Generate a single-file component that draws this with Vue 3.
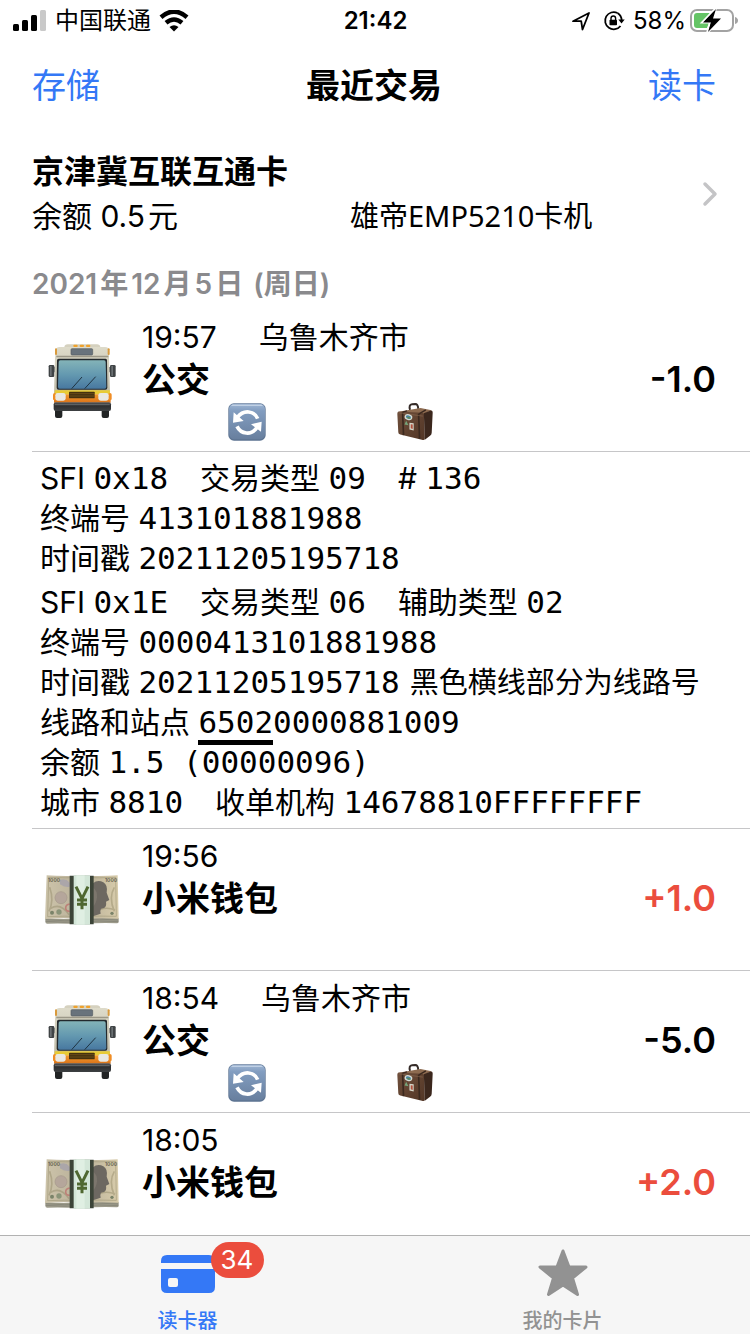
<template>
  <div class="app">
    <!-- shared gradients and pictograms -->
    <svg class="sprite" width="0" height="0" aria-hidden="true">
      <defs>
        <linearGradient id="glass" x1="0" y1="0" x2="0" y2="1">
          <stop offset="0" stop-color="#83b3b8" />
          <stop offset="0.5" stop-color="#6499b0" />
          <stop offset="1" stop-color="#4878a0" />
        </linearGradient>
        <linearGradient id="shell" x1="0" y1="0" x2="0" y2="1">
          <stop offset="0" stop-color="#dedbca" />
          <stop offset="1" stop-color="#bdb9a6" />
        </linearGradient>
        <linearGradient id="orange" x1="0" y1="0" x2="0" y2="1">
          <stop offset="0" stop-color="#f39a2e" />
          <stop offset="1" stop-color="#d9731a" />
        </linearGradient>
        <linearGradient id="bumper" x1="0" y1="0" x2="0" y2="1">
          <stop offset="0" stop-color="#55585b" />
          <stop offset="0.4" stop-color="#2c2e30" />
          <stop offset="1" stop-color="#3d4042" />
        </linearGradient>
        <linearGradient id="key" x1="0" y1="0" x2="0" y2="1">
          <stop offset="0" stop-color="#9fb6d4" />
          <stop offset="0.2" stop-color="#829dc0" />
          <stop offset="1" stop-color="#687f9e" />
        </linearGradient>
        <linearGradient id="leather" x1="0" y1="0" x2="1" y2="1">
          <stop offset="0" stop-color="#6f4f3b" />
          <stop offset="1" stop-color="#523626" />
        </linearGradient>
        <linearGradient id="note" x1="0" y1="0" x2="1" y2="0">
          <stop offset="0" stop-color="#cdc4aa" />
          <stop offset="0.5" stop-color="#b7ae98" />
          <stop offset="1" stop-color="#d8ccab" />
        </linearGradient>
      </defs>

      <symbol id="bus" viewBox="52 96 210 228">
        <rect x="76" y="290" width="22" height="31" rx="6" fill="#222425" />
        <rect x="216" y="290" width="22" height="31" rx="6" fill="#222425" />
        <path d="M72 168h8v16h-8zM236 168h8v16h-8z" fill="#77797a" />
        <rect x="57" y="162" width="17" height="36" rx="4" fill="#3f4345" />
        <rect x="241" y="162" width="17" height="36" rx="4" fill="#3f4345" />
        <path d="M61 165h5v30h-5zM245 165h5v30h-5z" fill="#6b7073" />
        <path d="M104 108q1-8 10-8h88q9 0 10 8z" fill="#d5d1bf" />
        <path d="M78 120q0-12 12-12h136q12 0 12 12v22l3 108H73l3-108z" fill="url(#shell)" />
        <rect x="76" y="112" width="6" height="20" rx="3" fill="#d99a3c" />
        <rect x="234" y="112" width="6" height="20" rx="3" fill="#d99a3c" />
        <path d="M80 134h156v5H80z" fill="#9c9888" />
        <rect x="131" y="101" width="13" height="7" rx="3" fill="#f0a22c" />
        <rect x="150" y="101" width="13" height="7" rx="3" fill="#f0a22c" />
        <rect x="169" y="101" width="13" height="7" rx="3" fill="#f0a22c" />
        <rect x="124" y="113" width="65" height="19" rx="3" fill="#69737c" stroke="#555c62" stroke-width="2" />
        <path d="M87 143h141q4 0 4 5l1 82q0 6-6 6H87q-6 0-6-6l1-82q0-5 5-5z" fill="#23292d" />
        <path d="M92 148h131q5 0 5 5l2 74q0 6-5 6H90q-5 0-5-6l2-74q0-5 5-5z" fill="url(#glass)" />
        <path d="M126 233l31-35M165 233l33-36" stroke="#1f3442" stroke-width="3" fill="none" />
        <path d="M75 238h166v12H75z" fill="#e8cb35" />
        <path d="M73 250h170v25H73z" fill="url(#orange)" />
        <rect x="118" y="242" width="77" height="20" rx="2" fill="#44310f" />
        <path d="M120 248h73M120 255h73" stroke="#7d5a1c" stroke-width="2" />
        <rect x="70" y="246" width="10" height="22" rx="5" fill="#f08d25" />
        <rect x="236" y="246" width="10" height="22" rx="5" fill="#f08d25" />
        <rect x="77" y="246" width="31" height="23" rx="7" fill="#e9e8e2" />
        <rect x="206" y="246" width="31" height="23" rx="7" fill="#e9e8e2" />
        <rect x="72" y="274" width="172" height="26" rx="6" fill="url(#bumper)" />
        <path d="M76 281h164" stroke="#797d80" stroke-width="2" />
      </symbol>

      <symbol id="money" viewBox="43 100 228 156">
        <path d="M47 232q60 6 110 0t110 0v11q0 5-6 5-50-2-104 2-60-2-104-1-6 0-6-6z" fill="#9c9a8a" />
        <path d="M48 237q60 6 109 1t109 0M48 242q60 5 109 1t109 0" stroke="#77776a" stroke-width="1.5" fill="none" />
        <path d="M51 104q50 4 106 1 60 3 107-1l3 130q-56-3-110 1-58-4-111 0z" fill="url(#note)" />
        <path d="M57 110q50 3 100 0 54 3 101 0l2 117q-52-2-103 1-53-3-103 0z" fill="none" stroke="#a39b7c" stroke-width="2" />
        <path d="M60 140q14 40-2 72M254 140q-18 30 0 72M62 204q30-20 56 18M192 218q30-24 64-10" fill="none" stroke="#918767" stroke-width="5" opacity="0.45" />
        <circle cx="94" cy="171" r="18" fill="#b5a69b" stroke="#a5998b" stroke-width="2" />
        <path d="M91 118q16-7 29 8v12q-16 3-29-7z" fill="#a5a1ab" opacity="0.8" />
        <path d="M120 190q-12 2-12 12t12 10" fill="none" stroke="#bd8178" stroke-width="5" />
        <circle cx="67" cy="216" r="6" fill="#7a8369" />
        <circle cx="88" cy="214" r="8" fill="#8a9478" />
        <circle cx="247" cy="218" r="5" fill="#7a8369" />
        <path d="M190 128q14-12 31-3 14 8 10 31l8 22-10 5q3 16-8 20-12 0-8 16l-23 8z" fill="#6d6861" />
        <path d="M190 140q14 12 12 30t-12 28z" fill="#7c766d" />
        <text x="55" y="125" class="note-text">1000</text>
        <text x="226" y="125" class="note-text">1000</text>
        <path d="M120 105h72v146h-72z" fill="#3c4438" />
        <path d="M132 104h49v148h-49z" fill="#d3e6d8" />
        <path d="M140 104h25v148h-25z" fill="#e0efe3" />
        <path d="M139 138l18 36 18-36M157 172v34M142 178h30M142 191h30" fill="none" stroke="#4f6831" stroke-width="9" />
      </symbol>

      <symbol id="refresh" viewBox="0 0 114 114">
        <rect x="1" y="1" width="112" height="112" rx="17" fill="#5c7391" />
        <rect x="3" y="2" width="108" height="107" rx="16" fill="url(#key)" />
        <path d="M12 7h90" stroke="#c0d0e4" stroke-width="4" stroke-linecap="round" />
        <path d="M28 43q14-18 34-16 20 2 27 20M88 72q-13 20-33 18-19-2-28-20" fill="none" stroke="#fff" stroke-width="11" />
        <path d="M17 28l-2 31 32-5zM99 86l2-30-32 8z" fill="#fff" />
      </symbol>

      <symbol id="suitcase" viewBox="48 36 116 116">
        <path d="M91 57q-5-16 6-17l10-1q8 0 9 15" fill="none" stroke="#342b28" stroke-width="6" />
        <path d="M55 63l68-12 34 7-26 13z" fill="#8d6b50" />
        <path d="M56 62q-4 1-4 7l3 56q0 6 6 7l69 17q6 1 6-5l-2-72q0-5-5-6z" fill="url(#leather)" />
        <path d="M133 67l21-8q6-1 6 6l-3 62q0 6-5 9l-16 12z" fill="#3b271d" />
        <path d="M68 65l3 69M117 70l3 75" stroke="#3b291f" stroke-width="5" />
        <path d="M68 64l14-4M117 70l22-13" stroke="#3b291f" stroke-width="4" />
        <path d="M56 66l74 10" stroke="#a08064" stroke-width="2" opacity="0.6" />
        <ellipse cx="86" cy="79" rx="12" ry="9" fill="#d5dcd6" transform="rotate(16 86 79)" />
        <ellipse cx="86" cy="79" rx="8" ry="5" fill="#4c849e" transform="rotate(16 86 79)" />
        <path d="M79 82l8-4 7 6z" fill="#5f8a48" />
        <path d="M79 90l7 14-12-2z" fill="#75a47a" />
        <path d="M89 96l13 2v22l-13-3z" fill="#d4d5c8" />
        <path d="M93 101l6 1v13l-6-2z" fill="#b2503c" />
      </symbol>
    </svg>

    <header class="status-bar">
      <div class="status-left">
        <svg width="34" height="22" viewBox="0 0 34 22" aria-hidden="true">
          <rect x="0" y="14" width="6" height="7" rx="1.5" />
          <rect x="9" y="10" width="6" height="11" rx="1.5" />
          <rect x="18" y="5" width="6" height="16" rx="1.5" />
          <rect x="27" y="0" width="6" height="21" rx="1.5" fill="#c9c9c9" />
        </svg>
        <span>中国联通</span>
        <svg width="30" height="22" viewBox="0 0 30 22" aria-hidden="true">
          <path d="M2 7.200Q15-4 28 7.200" fill="none" stroke="#000" stroke-width="4.500" />
          <path d="M7 12.800q8-6.500 16 0" fill="none" stroke="#000" stroke-width="4.500" />
          <path d="M10.500 17q4.500-3.500 9 0L15 21.500z" />
        </svg>
      </div>
      <span class="clock">21:42</span>
      <div class="status-right">
        <svg width="20" height="20" viewBox="0 0 20 20" aria-hidden="true">
          <path d="M2 10.200L18 2l-6.500 16.500-1.300-8.300z" fill="none" stroke="#000" stroke-width="1.800" stroke-linejoin="round" />
        </svg>
        <svg class="lock" width="22" height="22" viewBox="0 0 22 22" aria-hidden="true">
          <path d="M14.500 3A8.600 8.600 0 1 0 17.500 16" fill="none" stroke="#000" stroke-width="1.800" />
          <path d="M14.500 3A8.600 8.600 0 0 1 18.600 10" fill="none" stroke="#000" stroke-width="1.800" />
          <path d="M15.300 9.500h6.400L18.500 13.500z" />
          <rect x="6.500" y="9.700" width="7.500" height="5.600" rx="0.800" />
          <path d="M8 10V8.300a2.300 2.300 0 0 1 4.600 0V10" fill="none" stroke="#000" stroke-width="1.400" />
        </svg>
        <span>58%</span>
        <svg width="48" height="26" viewBox="0 0 48 26" aria-hidden="true">
          <rect x="1" y="2" width="42" height="21" rx="6" fill="none" stroke="#a3a3a3" stroke-width="2" />
          <path d="M45 9q3 1 3 3.500T45 16z" fill="#a3a3a3" />
          <path d="M7 5h13l-7 10h6l-2 5H7q-3 0-3-3V8q0-3 3-3z" fill="#65c466" />
          <path d="M26 0L12 14.500h8L17 25l14-14.500h-8z" stroke="#fff" stroke-width="2" />
          <path d="M26 1L13 14.500h8L18 24l13-13.500h-8z" />
        </svg>
      </div>
    </header>

    <nav class="nav-bar">
      <button type="button" class="nav-btn">存储</button>
      <h1>最近交易</h1>
      <button type="button" class="nav-btn">读卡</button>
    </nav>

    <main class="content">
      <a class="card" href="#card">
        <span class="card-info">
          <strong>京津冀互联互通卡</strong>
          <span class="card-line">
            <span class="balance">余额 0.5<span class="unit">元</span></span>
            <span class="note">雄帝EMP5210卡机</span>
          </span>
        </span>
        <svg width="16" height="26" viewBox="0 0 16 26" aria-hidden="true">
          <path d="M3 3l10 10L3 23" fill="none" stroke="#c4c4c6" stroke-width="3.500" stroke-linecap="round" stroke-linejoin="round" />
        </svg>
      </a>

      <h2>2021<span class="unit">年</span>12<span class="unit">月</span>5<span class="unit">日</span> (周日)</h2>

      <ul class="list">
        <li v-for="item in trades" :key="item.time">
          <div class="trade">
            <svg v-if="item.kind === 'bus'" class="trade-icon" width="70" height="76"><use href="#bus" /></svg>
            <svg v-else class="trade-icon" width="76" height="52"><use href="#money" /></svg>
            <div class="trade-body">
              <div class="trade-meta">
                <time>{{ item.time }}</time>
                <span v-if="item.city">{{ item.city }}</span>
              </div>
              <strong class="trade-name">{{ item.name }}</strong>
              <div v-if="item.kind === 'bus'" class="trade-tags">
                <svg width="38" height="38"><use href="#refresh" /></svg>
                <svg width="38" height="38"><use href="#suitcase" /></svg>
              </div>
            </div>
            <span class="amount" :class="{ 'amount--in': item.amount > 0 }">{{ format(item.amount) }}</span>
          </div>

          <div v-if="item.records" class="details">
            <div v-for="(record, r) in item.records" :key="r" class="record">
              <p v-for="(line, l) in record" :key="l">
                <span v-for="field in line" :key="field.label" class="field">
                  {{ field.label }}
                  <code><span v-if="field.mark" class="mark">{{ field.mark }}</span>{{ field.value }}</code>
                  <span v-if="field.note" class="note note--inline">{{ field.note }}</span>
                </span>
              </p>
            </div>
          </div>
        </li>
      </ul>
    </main>

    <nav class="tab-bar">
      <a class="tab tab--active" href="#reader">
        <span class="tab-icon">
          <svg width="54" height="40" viewBox="0 0 54 40" aria-hidden="true">
            <path d="M0 9V7q0-6 6-6h42q6 0 6 6v2zM0 15h54v18q0 6-6 6H6q-6 0-6-6zM9 24q-2 0-2 2v5q0 2 2 2h6q2 0 2-2v-5q0-2-2-2z" fill="currentColor" fill-rule="evenodd" />
          </svg>
          <span class="badge">34</span>
        </span>
        读卡器
      </a>
      <a class="tab" href="#cards">
        <span class="tab-icon">
          <svg width="52" height="50" viewBox="0 0 52 50" aria-hidden="true">
            <path d="M26 2l6 16h17L35.500 29l5 16.500L26 36 11.500 45.500l5-16.500L3 18h17z" fill="currentColor" stroke="currentColor" stroke-width="3" stroke-linejoin="round" />
          </svg>
        </span>
        我的卡片
      </a>
    </nav>
  </div>
</template>

<script setup>
import { ref } from 'vue'

const trades = ref([
  {
    kind: 'bus',
    time: '19:57',
    city: '乌鲁木齐市',
    name: '公交',
    amount: -1,
    records: [
      [
        [{ label: 'SFI', value: '0x18' }, { label: '交易类型', value: '09' }, { label: '#', value: '136' }],
        [{ label: '终端号', value: '413101881988' }],
        [{ label: '时间戳', value: '20211205195718' }],
      ],
      [
        [{ label: 'SFI', value: '0x1E' }, { label: '交易类型', value: '06' }, { label: '辅助类型', value: '02' }],
        [{ label: '终端号', value: '0000413101881988' }],
        [{ label: '时间戳', value: '20211205195718', note: '黑色横线部分为线路号' }],
        [{ label: '线路和站点', mark: '6502', value: '0000881009' }],
        [{ label: '余额', value: '1.5 (00000096)' }],
        [{ label: '城市', value: '8810' }, { label: '收单机构', value: '14678810FFFFFFFF' }],
      ],
    ],
  },
  { kind: 'wallet', time: '19:56', name: '小米钱包', amount: 1 },
  { kind: 'bus', time: '18:54', city: '乌鲁木齐市', name: '公交', amount: -5 },
  { kind: 'wallet', time: '18:05', name: '小米钱包', amount: 2 },
])

function format(amount) {
  return (amount > 0 ? '+' : '') + amount.toFixed(1)
}
</script>

<style>
body { margin: 0; background: #fff; }
</style>

<style scoped>
.app {
  display: flex; flex-direction: column; height: 100vh; overflow: hidden;
  background: #fff; color: #000;
  font-family: Inter, "Noto Sans CJK SC", sans-serif;
  font-size: 30px; line-height: 40px;
}
.sprite { position: absolute; }
.note-text { font-size: 15px; font-weight: 600; fill: #5f5c4a; }
svg { flex: none; display: block; }
strong { font-weight: 600; }

.status-bar {
  flex: none; padding: 1px 12px 0 13px;
  display: grid; grid-template-columns: 1fr auto 1fr; align-items: center;
  font-size: 24px;
}
.status-left { display: flex; align-items: center; gap: 8px; }
.status-right { display: flex; align-items: center; justify-content: flex-end; gap: 4px; }
.lock { margin: 0 4px 0 8px; }
.clock { font-weight: 600; }

.nav-bar {
  flex: none; padding: 25px 34px 24px 32px;
  display: flex; align-items: center; justify-content: space-between;
}
.nav-btn {
  padding: 0; border: none; background: none; cursor: pointer;
  font: inherit; font-size: 34px; color: #3478f6;
}
h1 { margin: 0; font-size: 34px; font-weight: 600; }

.content { flex: 1; min-height: 0; overflow-y: auto; scrollbar-width: none; }
.card {
  display: flex; align-items: center; justify-content: space-between;
  padding: 22px 32px; color: inherit; text-decoration: none;
}
.card-info { display: flex; flex-direction: column; gap: 4px; }
.card-info strong { font-size: 32px; }
.card-line { display: flex; }
.balance { width: 318px; }
.unit { margin: 0 3px; }
.note { font-family: "Noto Sans", "Noto Sans CJK SC", sans-serif; font-size: 29px; }
.note--inline { margin-left: 10px; }
h2 {
  margin: 0; padding: 6px 32px;
  font-size: 28px; font-weight: 600; color: #8a8a8d;
}

.list { margin: 0; padding: 0; list-style: none; }
.trade, .details { margin-left: 32px; border-bottom: 1px solid #c6c6c8; }
.trade { display: flex; height: 141px; padding-right: 34px; align-items: center; }
.trade-icon { width: 100px; margin-right: 10px; }
.trade-body { flex: 1; align-self: stretch; padding-top: 7px; }
.trade-meta { display: flex; gap: 42px; }
.trade-name { display: block; font-size: 34px; line-height: 46px; }
.trade-tags { display: flex; gap: 130px; padding-left: 86px; }
.amount { padding-bottom: 4px; font-size: 36px; font-weight: 600; }
.amount--in { color: #eb4d3d; }

.details { display: flex; flex-direction: column; gap: 4px; padding: 6px 8px; }
.record p { margin: 0; display: flex; gap: 32px; height: 40px; white-space: nowrap; }
code { font-family: "DejaVu Sans Mono", monospace; font-size: 31px; }
.mark { border-bottom: 5px solid #000; }

.tab-bar {
  flex: none; display: flex; height: 98px;
  border-top: 1px solid #b2b2b2; background: #f6f6f6;
}
.tab {
  flex: 1; display: flex; flex-direction: column; align-items: center;
  font-size: 20px; line-height: 26px; font-weight: 500; color: #929292; text-decoration: none;
}
.tab--active { color: #3478f6; }
.tab-icon { position: relative; display: flex; align-items: center; padding-top: 4px; height: 68px; }
.badge {
  position: absolute; left: 50px; top: 6px; min-width: 53px; height: 36px; border-radius: 18px;
  background: #eb4d3d; color: #fff; text-align: center; font-size: 26px; line-height: 36px; font-weight: 400;
}
</style>
